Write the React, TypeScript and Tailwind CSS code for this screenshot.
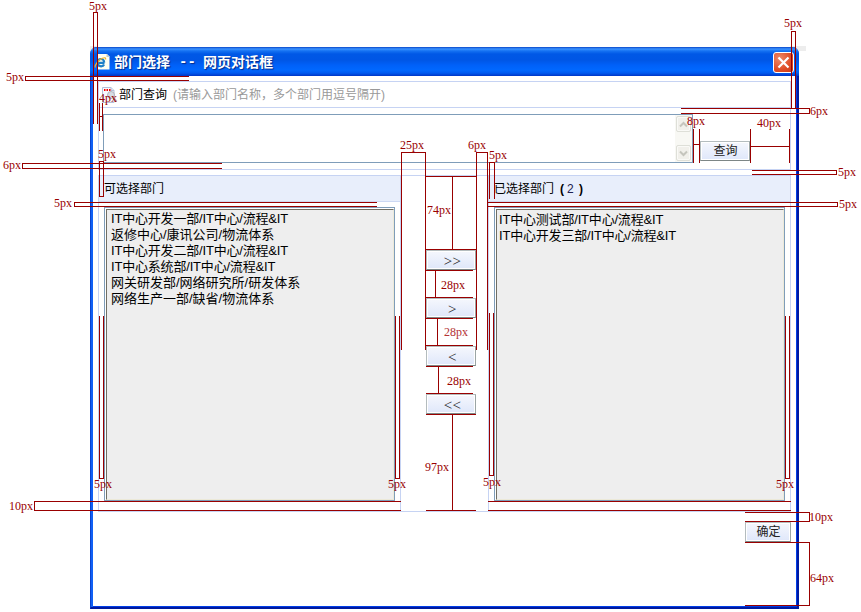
import React from "react";

const CJK = "font-['Liberation_Sans','Noto_Sans_CJK_SC',sans-serif]";

const departments = [
  "IT中心开发一部/IT中心/流程&IT",
  "返修中心/康讯公司/物流体系",
  "IT中心开发二部/IT中心/流程&IT",
  "IT中心系统部/IT中心/流程&IT",
  "网关研发部/网络研究所/研发体系",
  "网络生产一部/缺省/物流体系",
];
const selected = ["IT中心测试部/IT中心/流程&IT", "IT中心开发三部/IT中心/流程&IT"];

// Dimension strokes, one pixel thick: [x1, y1, x2, y2], ends included.
const strokes: number[][] = [
  [93, 12, 97, 12], [93, 12, 93, 123], [97, 12, 97, 123],
  [25, 76, 188, 76], [25, 80, 188, 80], [25, 76, 25, 80],
  [99, 103, 99, 130], [102, 103, 102, 130], [99, 116, 102, 116],
  [99, 161, 103, 161], [99, 196, 103, 196], [99, 161, 99, 196], [103, 161, 103, 196],
  [22, 163, 221, 163], [22, 168, 221, 168], [22, 163, 22, 168],
  [74, 202, 376, 202], [74, 206, 376, 206], [74, 202, 74, 206],
  [99, 316, 99, 478], [103, 316, 103, 478], [99, 478, 103, 478],
  [395, 316, 395, 478], [399, 316, 399, 478], [395, 478, 399, 478],
  [401, 152, 425, 152], [401, 152, 401, 349], [425, 152, 425, 349],
  [476, 152, 487, 152], [476, 152, 476, 349], [487, 152, 487, 349],
  [489, 162, 494, 162], [489, 162, 489, 198], [494, 162, 494, 198],
  [425, 176, 476, 176], [452, 176, 452, 249], [425, 249, 476, 249],
  [425, 270, 472, 270], [435, 270, 435, 297], [425, 297, 472, 297],
  [425, 318, 472, 318], [437, 318, 437, 345], [425, 345, 472, 345],
  [426, 366, 472, 366], [438, 366, 438, 393], [426, 393, 472, 393],
  [426, 414, 475, 414], [452, 414, 452, 510], [426, 510, 475, 510],
  [488, 202, 837, 202], [488, 206, 837, 206], [837, 202, 837, 206],
  [489, 313, 489, 475], [493, 313, 493, 475], [489, 475, 493, 475],
  [785, 316, 785, 478], [789, 316, 789, 478], [785, 478, 789, 478],
  [791, 31, 795, 31], [791, 31, 791, 108], [795, 31, 795, 108],
  [681, 108, 809, 108], [681, 113, 809, 113], [809, 108, 809, 113],
  [693, 129, 693, 162], [699, 129, 699, 162], [693, 144, 699, 144],
  [750, 129, 750, 162], [789, 129, 789, 162], [750, 146, 789, 146],
  [752, 170, 836, 170], [752, 174, 836, 174], [836, 170, 836, 174],
  [34, 501, 400, 501], [34, 510, 400, 510], [34, 501, 34, 510],
  [488, 501, 790, 501], [488, 510, 790, 510],
  [745, 512, 809, 512], [745, 521, 809, 521], [809, 512, 809, 521],
  [745, 542, 809, 542], [745, 605, 809, 605], [809, 542, 809, 605],
];

// Dimension captions: left edge, baseline, text.
const captions: [number, number, string][] = [
  [89, 10, "5px"], [784, 27, "5px"], [6, 81, "5px"], [99, 102, "4px"],
  [810, 115, "6px"], [687, 125, "8px"], [757, 127, "40px"],
  [400, 149, "25px"], [468, 149, "6px"], [98, 158, "5px"], [489, 159, "5px"],
  [3, 169, "6px"], [838, 176, "5px"], [54, 207, "5px"], [839, 208, "5px"],
  [427, 214, "74px"], [441, 289, "28px"], [444, 336, "28px"], [447, 385, "28px"],
  [425, 471, "97px"], [94, 488, "5px"], [388, 488, "5px"], [483, 486, "5px"],
  [776, 488, "5px"], [9, 510, "10px"], [809, 521, "10px"], [810, 582, "64px"],
];

function Dimensions() {
  return (
    <svg className="pointer-events-none absolute inset-0" width="861" height="612" shapeRendering="crispEdges">
      {strokes.map(([a, b, c, d], i) => (
        <rect key={i} x={a} y={b} width={c - a + 1} height={d - b + 1} fill="#990000" />
      ))}
      {captions.map(([x, y, t], i) => (
        <text key={i} x={x} y={y} fill={y === 336 ? "#b33333" : "#990000"} className="font-['Liberation_Serif',serif] text-[12px]">
          {t}
        </text>
      ))}
    </svg>
  );
}

function Button({ children, className = "" }: { children: React.ReactNode; className?: string }) {
  return (
    <button
      className={`flex h-5 shrink-0 items-center justify-center border border-t-[#b4bcbe] border-l-[#b4bcbe] border-r-[#9ba5a5] border-b-[#7d8686] bg-gradient-to-b from-[#f5f7fd] to-[#dfe7fa] pl-px text-xs text-[#222] shadow-[inset_0_0_0_1px_#fff] ${className}`}
    >
      {children}
    </button>
  );
}

function MoveButton({ label }: { label: string }) {
  return (
    <Button className="w-[50px]">
      <span className="pt-[3px] pl-0.5 font-['Liberation_Serif',serif] text-[15px] leading-none tracking-[0.3px]">{label}</span>
    </Button>
  );
}

function List({ items, className = "" }: { items: string[]; className?: string }) {
  return (
    <div className={`h-[294px] w-[291px] border border-[#7f9db9] bg-white ${className}`}>
      <div className="mt-px ml-px h-[291px] border border-t-[#716f64] border-r-[#ece9d8] border-b-[#ece9d8] border-l-[#716f64] bg-[#eeeeee] text-[13px] leading-4 text-black">
        {items.map((t) => (
          <div key={t} className={`whitespace-nowrap ${t.startsWith("IT") ? "tracking-[-0.19px]" : ""}`}>{t}</div>
        ))}
      </div>
    </div>
  );
}

function DocumentIcon() {
  return (
    <svg width="16" height="18" viewBox="0 0 16 18" className="shrink-0">
      <path d="M.5 1.500h8.500l3 3v12H.500z" fill="#f7f9fe" stroke="#b4c0da" />
      <path d="M9 1.500v3h3" fill="#dce5f5" stroke="#b4c0da" />
      <path d="M2 3h1.500v2H2zM4.500 3H6v2H4.500zM7 3h1.500v2H7z" fill="#f00000" />
      <circle cx="9" cy="9" r="3.500" fill="#d7dce5" stroke="#b0b3bc" />
      <path d="M11.500 12l3 3.500" stroke="#b5b8c0" strokeWidth="2" />
    </svg>
  );
}

function BrowserIcon() {
  return (
    <svg width="16" height="16" viewBox="0 0 16 16" className="shrink-0">
      <path d="M3 0h10l2.500 2.500V15.500H3z" fill="#fffef2" />
      <path d="M12.500 0v3h3z" fill="#c8c8bc" />
      <path d="M10.500 8.900H4M10.200 8.500C10 5.800 8.500 5 7 5 4.900 5 3.600 6.600 3.600 8.800c0 2.100 1.300 3.500 3.500 3.500 1.500 0 2.500-.6 3-1.800" fill="none" stroke="#2080c8" strokeWidth="2.200" />
      <path d="M1.500 13.500C0 11.500 4.500 6 8.300 4.300c2.500-1 3.700-.7 3.200 1.200" fill="none" stroke="#eeb32b" strokeWidth="1.200" />
    </svg>
  );
}

function ScrollArrow({ up }: { up?: boolean }) {
  return (
    <div className="flex h-4 w-[15px] items-center justify-center rounded-[2px] border border-[#dedfd8] bg-[#f1f0eb] shadow-[inset_0_0_0_1px_#fafaf7]">
      <svg width="9" height="7" viewBox="0 0 9 7">
        <path d={up ? "M1 5.500l3.500-3.500L8 5.500" : "M1 1.500l3.500 3.500L8 1.500"} fill="none" stroke="#c5c5bd" strokeWidth="2" />
      </svg>
    </div>
  );
}

export default function App() {
  return (
    <div className={`relative h-[612px] w-[861px] overflow-hidden bg-white pt-[47px] pl-[90px] ${CJK}`}>
      <div className="absolute top-[46px] left-[790px] h-[5px] w-4 bg-[#ededed]" />
      <div className="absolute top-[46px] left-[90px] h-[5px] w-[7px] bg-[#ededed]" />
      <div className="relative flex h-[562px] w-[709px] flex-col rounded-t-[7px] border-r-2 border-b-2 border-l border-r-[#0019a0] border-b-[#0019a0] border-l-[#0842cf] bg-white px-px pb-px shadow-[inset_2px_0_0_#1060f5,inset_-1px_-1px_0_#003ee8]">
        <header className="-mr-[3px] -ml-0.5 flex h-[29px] shrink-0 items-center rounded-t-[7px] bg-[linear-gradient(180deg,#0847c8_0,#3b92ff_2px,#1471f2_4px,#0058e6_7px,#0056e5_13px,#0060f8_18px,#0068ff_23px,#005af0_26px,#0036c6_29px)] pr-[5px] pl-1">
          <BrowserIcon />
          <h1 className="ml-1 flex h-[29px] items-center pt-px text-[14px] leading-none font-bold text-white [text-shadow:1px_1px_1px_#062b88]">
            <span className="w-[65px]">部门选择</span>
            <span className="w-6 font-['Liberation_Mono',monospace]">--</span>
            <span className="whitespace-nowrap">网页对话框</span>
          </h1>
          <button className="mt-0.5 ml-auto flex size-[21px] items-center justify-center rounded-[3px] border border-white bg-[radial-gradient(circle_at_30%_30%,#ee8a6a,#df4c25_60%,#c7381a)]">
            <svg width="15" height="15" viewBox="0 0 15 15" className="shrink-0">
              <path d="M2.500 2.500l10 10M12.500 2.500l-10 10" stroke="#fff" strokeWidth="2.200" />
            </svg>
          </button>
        </header>

        <section className="mt-[5px] ml-1.5 h-[89px] w-[693px] shrink-0 border border-[#c6d3f3]">
          <div className="flex h-[26px] items-center border-b border-[#c6d3f3] pl-[3px] text-xs whitespace-nowrap">
            <DocumentIcon />
            <span className="w-[55px] pt-px pl-px text-black">部门查询</span>
            <span className="pt-px text-[#999]">(请输入部门名称，多个部门用逗号隔开)</span>
          </div>
          <div className="flex pt-1.5 pl-1">
            <div className="flex h-[49px] w-[590px] justify-end border border-[#7f9db9] bg-white">
              <div className="flex w-[17px] flex-col items-center justify-between bg-[#f8f8f4] py-px">
                <ScrollArrow up />
                <ScrollArrow />
              </div>
            </div>
            <Button className="mt-[27px] ml-[7px] w-[50px]">查询</Button>
          </div>
        </section>

        <section className="mt-[5px] ml-1.5 flex h-[337px] w-[693px] shrink-0 border-t border-b border-[#c6d3f3]">
          <div className="w-[303px] shrink-0 border-r border-l border-[#c6d3f3]">
            <h2 className="flex h-[26px] items-center border-b border-[#cdd9f3] bg-[#e8eefb] pl-[5px] text-xs text-black">可选择部门</h2>
            <List items={departments} className="mt-[5px] ml-[5px] [&>div]:pt-px [&>div]:pl-1" />
          </div>
          <div className="flex w-[87px] shrink-0 flex-col gap-7 pt-[74px] pl-[25px]">
            <MoveButton label=">>" />
            <MoveButton label=">" />
            <MoveButton label="<" />
            <MoveButton label="<<" />
          </div>
          <div className="w-[303px] shrink-0 border-r border-l border-[#c6d3f3]">
            <h2 className="flex h-[26px] items-center border-b border-[#cdd9f3] bg-[#e8eefb] pt-px pl-[5px] text-xs text-black">
              <span className="w-[66px]">已选择部门</span>
              <b className="w-[7px]">(</b>
              <span className="w-3 text-[#202050]">2</span>
              <b>)</b>
            </h2>
            <List items={selected} className="mt-[5px] ml-[5px] [&>div]:pt-0.5 [&>div]:pl-0.5" />
          </div>
        </section>

        <footer className="flex justify-end pt-[10px] pr-[5px]">
          <Button className="w-[46px]">确定</Button>
        </footer>
      </div>
      <Dimensions />
    </div>
  );
}
